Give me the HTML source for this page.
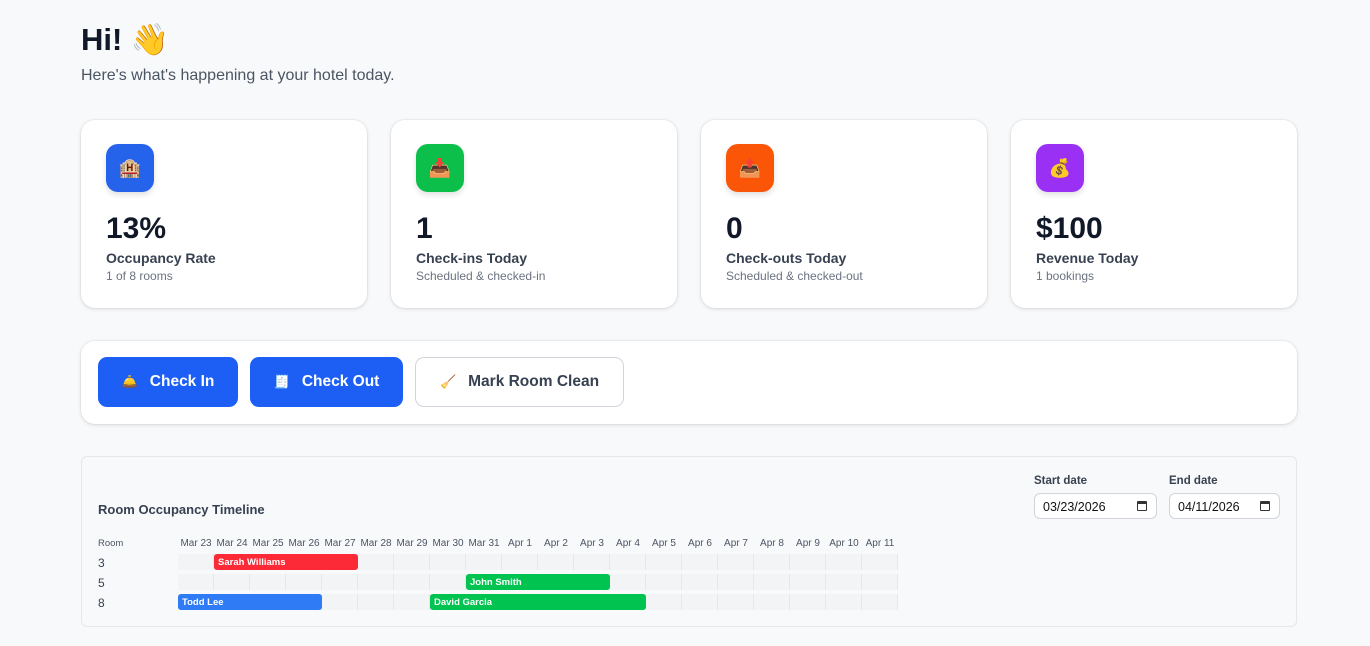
<!DOCTYPE html>
<html><head><meta charset="utf-8"><style>
*{box-sizing:border-box;margin:0;padding:0}
body{width:1370px;height:646px;background:#f8f9fb;font-family:"Liberation Sans","Noto Sans CJK JP",sans-serif;color:#111827;position:relative;overflow:hidden}
h1{position:absolute;left:81px;top:21px;font-size:31px;font-weight:700;color:#111827}
.sub{position:absolute;left:81px;top:67px;font-size:16px;color:#4b5563}
.card{position:absolute;top:120px;width:286px;height:188px;background:#fff;border-radius:14px;box-shadow:0 1px 4px rgba(0,0,0,.12),0 0 0 1px rgba(0,0,0,.03)}
.ic{position:absolute;left:25px;top:24px;width:48px;height:48px;border-radius:12px;display:flex;align-items:center;justify-content:center;font-size:18px;box-shadow:0 3px 6px rgba(0,0,0,.12)}
.num{position:absolute;left:25px;top:92px;font-size:30px;font-weight:700;color:#111827}
.lab{position:absolute;left:25px;top:130px;font-size:14px;font-weight:600;color:#374151}
.sm{position:absolute;left:25px;top:149px;font-size:12px;color:#6b7280}
.panel{position:absolute;left:81px;top:341px;width:1216px;height:83px;background:#fff;border-radius:14px;box-shadow:0 1px 4px rgba(0,0,0,.12),0 0 0 1px rgba(0,0,0,.03)}
.btn{position:absolute;top:16px;height:50px;border-radius:9px;font-size:15.5px;font-weight:600;display:flex;align-items:center;justify-content:center;gap:12px}
.btn span{font-size:13px}
.blue{background:#1d5ff5;color:#fff}
.tl{position:absolute;left:81px;top:456px;width:1216px;height:171px;border:1px solid #e5e7eb;border-radius:6px;background:#f8f9fb}
.tt{position:absolute;left:16px;top:45px;font-size:13px;font-weight:600;color:#374151}
.dl{position:absolute;top:18px;font-size:11.5px;font-weight:600;color:#374151}
.di{position:absolute;top:36px;height:26px;border:1px solid #d1d5db;border-radius:6px;background:#fff;font-size:12.5px;padding:6px 8px;color:#111}
.di b{position:absolute;right:9px;top:7px;width:10px;height:10px;border:1.5px solid #333;border-top-width:3px;border-radius:1px}
.hd{position:absolute;top:81px;font-size:10px;color:#4b5563;width:36px;text-align:center}
.rl{position:absolute;left:16px;font-size:12px;color:#374151}
.row{position:absolute;left:96px;width:720px;height:16px;background:repeating-linear-gradient(90deg,#f3f4f6 0 35px,#e5e7eb 35px 36px)}
.bar{position:absolute;height:16px;border-radius:3px;color:#fff;font-size:9.5px;font-weight:700;padding:3px 4px 0}
</style></head><body>
<h1>Hi! 👋</h1>
<div class="sub">Here's what's happening at your hotel today.</div>

<div class="card" style="left:81px"><div class="ic" style="background:#2563eb">🏨</div><div class="num">13%</div><div class="lab">Occupancy Rate</div><div class="sm">1 of 8 rooms</div></div>
<div class="card" style="left:391px"><div class="ic" style="background:#0bbf4a">📥</div><div class="num">1</div><div class="lab">Check-ins Today</div><div class="sm">Scheduled &amp; checked-in</div></div>
<div class="card" style="left:701px"><div class="ic" style="background:#fb5607">📤</div><div class="num">0</div><div class="lab">Check-outs Today</div><div class="sm">Scheduled &amp; checked-out</div></div>
<div class="card" style="left:1011px"><div class="ic" style="background:#9b30f5">💰</div><div class="num">$100</div><div class="lab">Revenue Today</div><div class="sm">1 bookings</div></div>

<div class="panel">
<div class="btn blue" style="left:17px;width:140px"><span>🛎️</span>Check In</div>
<div class="btn blue" style="left:169px;width:153px"><span>🧾</span>Check Out</div>
<div class="btn" style="left:334px;width:209px;border:1px solid #d1d5db;color:#374151;background:#fff"><span>🧹</span>Mark Room Clean</div>
</div>

<div class="tl">
<div class="tt">Room Occupancy Timeline</div>
<div class="dl" style="left:952px">Start date</div>
<div class="di" style="left:952px;width:123px">03/23/2026<b></b></div>
<div class="dl" style="left:1087px">End date</div>
<div class="di" style="left:1087px;width:111px">04/11/2026<b></b></div>
<div class="rl" style="top:81px;font-size:9.5px;color:#4b5563">Room</div>
<div class="hd" style="left:96px">Mar 23</div><div class="hd" style="left:132px">Mar 24</div><div class="hd" style="left:168px">Mar 25</div><div class="hd" style="left:204px">Mar 26</div><div class="hd" style="left:240px">Mar 27</div><div class="hd" style="left:276px">Mar 28</div><div class="hd" style="left:312px">Mar 29</div><div class="hd" style="left:348px">Mar 30</div><div class="hd" style="left:384px">Mar 31</div><div class="hd" style="left:420px">Apr 1</div><div class="hd" style="left:456px">Apr 2</div><div class="hd" style="left:492px">Apr 3</div><div class="hd" style="left:528px">Apr 4</div><div class="hd" style="left:564px">Apr 5</div><div class="hd" style="left:600px">Apr 6</div><div class="hd" style="left:636px">Apr 7</div><div class="hd" style="left:672px">Apr 8</div><div class="hd" style="left:708px">Apr 9</div><div class="hd" style="left:744px">Apr 10</div><div class="hd" style="left:780px">Apr 11</div>
<div class="rl" style="top:99px">3</div><div class="rl" style="top:119px">5</div><div class="rl" style="top:139px">8</div>
<div class="row" style="top:97px"></div><div class="row" style="top:117px"></div><div class="row" style="top:137px"></div>
<div class="bar" style="left:132px;width:144px;top:97px;background:#fb2a36">Sarah Williams</div>
<div class="bar" style="left:384px;width:144px;top:117px;background:#00c44f">John Smith</div>
<div class="bar" style="left:96px;width:144px;top:137px;background:#2f7bf6">Todd Lee</div>
<div class="bar" style="left:348px;width:216px;top:137px;background:#00c44f">David Garcia</div>
</div>
</body></html>
